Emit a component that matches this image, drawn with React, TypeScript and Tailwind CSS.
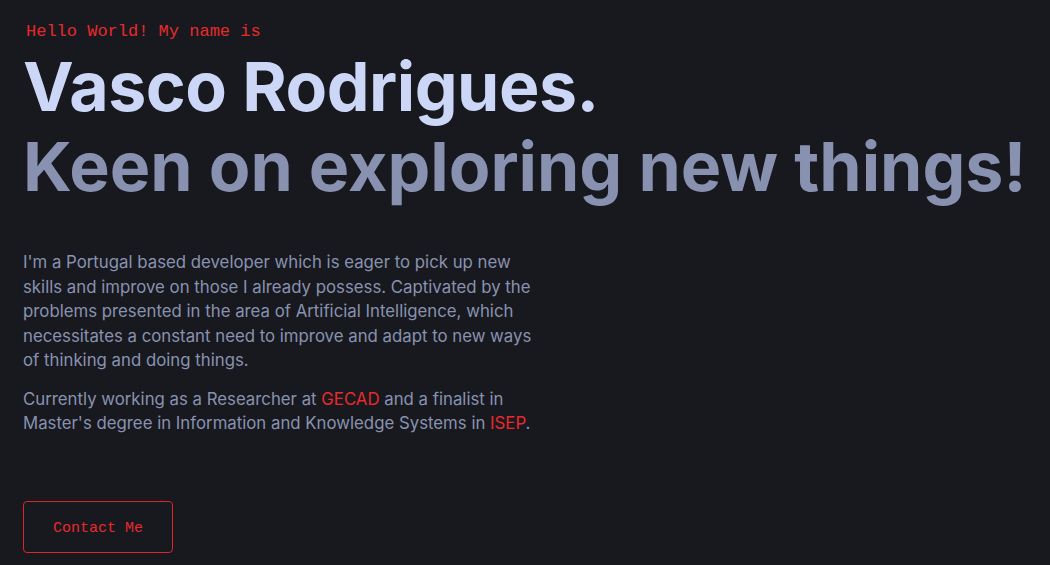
export default function App() {
  return (
    <div className="min-h-[565px] w-full bg-[#18191f] overflow-hidden">
      <div className="px-[23px] pt-[22px]">
        <p className="font-['Liberation_Mono',monospace] text-[17px] leading-[20px] text-[#e8292b] pl-[3px]">
          Hello World! My name is
        </p>
        <h1 className="mt-[4px] font-['Inter',sans-serif] font-bold text-[68px] leading-[80px] tracking-[-0.5px] text-[#ccd6f6]">
          Vasco Rodrigues.
        </h1>
        <h2 className="font-['Inter',sans-serif] font-bold text-[68px] leading-[80px] tracking-[0px] text-[#8892b0] whitespace-nowrap">
          Keen on exploring new things!
        </h2>
        <div className="mt-[44px] max-w-[520px] font-['Inter',sans-serif] text-[16.8px] leading-[24.5px] text-[#8892b0]">
          <p>
            I'm a Portugal based developer which is eager to pick up new skills and improve on those I already possess. Captivated by the problems presented in the area of Artificial Intelligence, which necessitates a constant need to improve and adapt to new ways of thinking and doing things.
          </p>
          <p className="mt-[14px]">
            Currently working as a Researcher at <span className="text-[#e8292b]">GECAD</span> and a finalist in Master's degree in Information and Knowledge Systems in <span className="text-[#e8292b]">ISEP</span>.
          </p>
        </div>
        <button className="mt-[65px] w-[150px] h-[52px] pt-[5px] border border-[#d9262a] rounded-[4px] font-['Liberation_Mono',monospace] text-[15px] text-[#e8292b]">
          Contact Me
        </button>
      </div>
    </div>
  );
}
